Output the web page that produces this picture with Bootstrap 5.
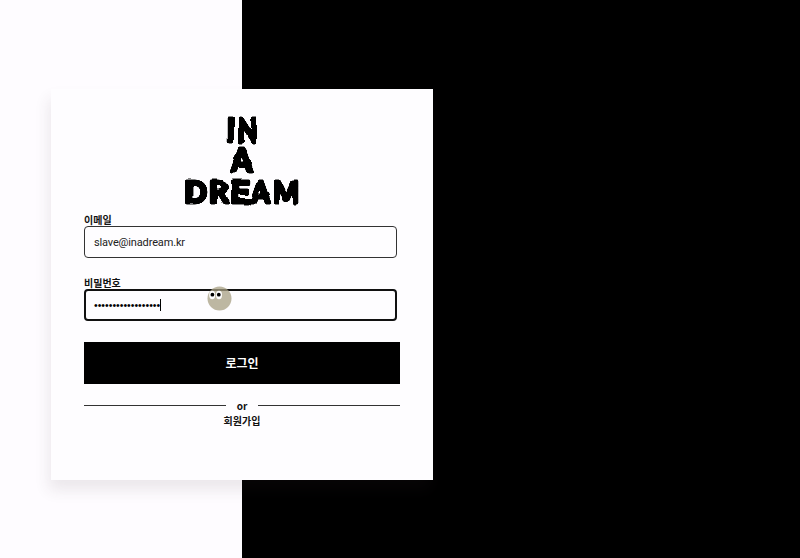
<!DOCTYPE html>
<html lang="ko">
<head>
<meta charset="utf-8">
<meta name="viewport" content="width=device-width, initial-scale=1">
<title>IN A DREAM</title>
<link href="https://cdn.jsdelivr.net/npm/bootstrap@5.3.0/dist/css/bootstrap.min.css" rel="stylesheet">
<style>
body{height:558px;overflow:hidden;color:#111;font-family:"Noto Sans CJK KR",sans-serif;background:linear-gradient(90deg,#fefcff 242px,#000 242px)}
.login-panel{width:382px;height:391px;margin:89px 0 0 51px;padding:26px 33px 0;background:#fefdff;box-shadow:-2px 10px 14px rgba(70,45,60,.1)}
.brand-logo{width:130px;height:96px;margin-left:92px;flex:none;overflow:visible}
.brand-logo text{font-family:Lato,sans-serif;font-weight:900;fill:#000;stroke:#000;stroke-linejoin:round}
.field-name{font-size:10px;font-weight:700;line-height:18px;height:15px}
.field-box{width:313px;height:32px;padding:0 9px;border:1px solid #333;border-radius:4px;background:transparent;color:#222;font:11px Roboto,"Liberation Sans",sans-serif;letter-spacing:-.15px}
.field-box.active{height:32px;border:2px solid #111;padding:0 8px;color:#000}
.secret{font:10.5px "Liberation Sans",sans-serif;letter-spacing:0}
.second-field{margin-top:16px}
.caret{width:1px;height:12px;background:#000}
.btn-login{height:42px;margin-top:21px;font-size:12px;font-weight:700;line-height:1}
.or-row{margin-top:14px}
.rule{height:1px;background:#333}
.or-text{font-size:10px;font-weight:700;line-height:15px;width:32px}
.join{font-size:10px;font-weight:700;line-height:16px}
.face{left:121px;top:-5px;width:25px;height:25px}
</style>
<script src="https://cdn.jsdelivr.net/npm/bootstrap@5.3.0/dist/js/bootstrap.bundle.min.js"></script>
</head>
<body>
<div class="d-flex">
<main class="login-panel d-flex flex-column">
  <svg class="brand-logo" viewBox="0 0 130 96" role="img" aria-label="IN A DREAM">
    <defs><filter id="brush" x="-10%" y="-10%" width="120%" height="120%" color-interpolation-filters="sRGB"><feTurbulence type="fractalNoise" baseFrequency=".09" numOctaves="1" seed="7"/><feDisplacementMap in="SourceGraphic" scale="4" xChannelSelector="R" yChannelSelector="G"/><feGaussianBlur stdDeviation=".7"/><feComponentTransfer><feFuncA type="linear" slope="2.2" intercept="-.6"/></feComponentTransfer></filter></defs>
    <g filter="url(#brush)" stroke-width="2.9">
      <text font-size="33" y="27" transform="scale(.82 1)" x="62 74.5">IN</text>
      <text font-size="32" x="55.2" y="57" textLength="21" lengthAdjust="spacingAndGlyphs">A</text>
      <text font-size="31" y="88.5" transform="scale(.88 1)" x="9.5"><tspan textLength="26" lengthAdjust="spacingAndGlyphs">D</tspan><tspan x="37.2" textLength="22.5" lengthAdjust="spacingAndGlyphs">R</tspan><tspan x="61" textLength="23" lengthAdjust="spacingAndGlyphs">E</tspan><tspan x="85">A</tspan><tspan x="110.5">M</tspan></text>
    </g>
  </svg>
  <form>
    <div class="field-name">이메일</div>
    <div class="field-box d-flex align-items-center">slave@inadream.kr</div>
    <div class="field-name second-field">비밀번호</div>
    <div class="field-box active d-flex align-items-center position-relative"><span class="secret">••••••••••••••••••</span><span class="caret"></span>
      <svg class="face position-absolute" viewBox="0 0 25 25"><circle cx="12.5" cy="12.5" r="12" fill="#a79f83" fill-opacity=".75"/><ellipse cx="5.2" cy="9" rx="3" ry="4.2" fill="#fff"/><ellipse cx="12" cy="9" rx="3" ry="4.2" fill="#fff"/><circle cx="5.4" cy="8.7" r="1.9"/><circle cx="11.8" cy="8.7" r="1.9"/></svg>
    </div>
    <button type="button" class="btn-login btn btn-dark bg-black border-0 rounded-0 w-100 p-0 d-block">로그인</button>
    <div class="or-row d-flex align-items-center"><span class="rule flex-fill"></span><span class="or-text text-center">or</span><span class="rule flex-fill"></span></div>
    <div class="join text-center">회원가입</div>
  </form>
</main>
</div>
</body>
</html>
